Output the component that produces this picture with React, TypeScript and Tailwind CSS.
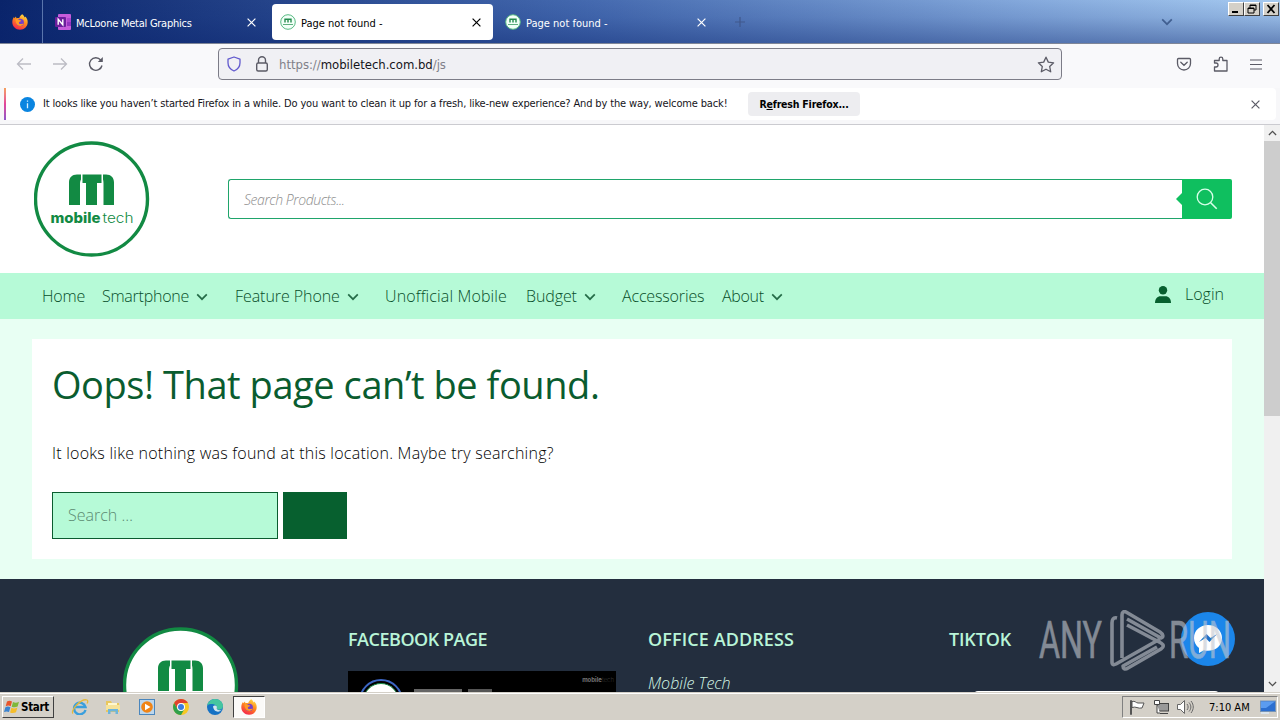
import type { ReactNode } from "react"
import clsx from "clsx"

const uiFont = "font-['DejaVu_Sans_Condensed','DejaVu_Sans',sans-serif] [font-stretch:condensed]"
const siteFont = "font-['Open_Sans','Noto_Sans',sans-serif] [font-stretch:normal]"

function Firefox({ size = 16 }: { size?: number }) {
  return (
    <svg width={size} height={size} viewBox="0 0 16 16" className="shrink-0">
      <defs>
        <linearGradient id="ffBody" x1="0.8" y1="0" x2="0.3" y2="1">
          <stop offset="0" stopColor="#ffe14a" />
          <stop offset="0.45" stopColor="#ff8a1c" />
          <stop offset="1" stopColor="#f5224d" />
        </linearGradient>
      </defs>
      <path
        d="M10.2.2c1.5 1 2.2 2.3 2.5 3.3.4-.2.5-.6.5-.9C15 4.200 15.800 6.300 15.700 8.600 15.500 12.800 12.200 15.800 8 15.800S.3 12.500.3 8.300C.3 6.200 1 4.300 2 3.100l.3 1.200L4 2.500l.4 1.700c1-.4 2-.4 2.800 0C7.600 2.500 8.700 1 10.200.2z"
        fill="url(#ffBody)"
      />
      <circle cx="8.200" cy="8.400" r="3.700" fill="#7540c8" />
      <path d="M3.500 5.300c1.500-.6 2.800-.2 3.800.6l2 .5c-.4 1.200-1.700 1-2.300 1.800-.5.8.2 2 1.600 1.900 1.300-.1 1.800-.7 3-.3-1 1.700-2.600 2.500-4.500 2-2.300-.6-3.800-3.500-3.600-6.500z" fill="#ff9a26" />
    </svg>
  )
}

function Logo({ className }: { className?: string }) {
  return (
    <svg width="116" height="116" viewBox="0 0 116 116" className={clsx("shrink-0", className)}>
      <circle cx="57.500" cy="58" r="56" fill="#fff" stroke="#128a43" strokeWidth="3.400" />
      <g fill="#128a43">
        <path d="M47 33.500h-4c-5 0-8 3-8 8V64h11V43.500c0-2 0-3 1-5z" />
        <path d="M48.500 33.500h19v8.500H63v22H52V42h-3.500z" />
        <path d="M69 33.500h3c5 0 8 3 8 8V64H69.500V43.500c0-2 0-3-.5-5z" />
      </g>
      <text x="16.500" y="82" fontSize="14" fontWeight="800" fontFamily="Inter" fill="#128a43" textLength="50" lengthAdjust="spacingAndGlyphs">
        mobile
      </text>
      <text x="68.500" y="82" fontSize="14" fontWeight="300" fontFamily="Inter" fill="#128a43" textLength="31" lengthAdjust="spacingAndGlyphs">
        tech
      </text>
    </svg>
  )
}

// The footer only shows the upper half of the badge
function LogoTop() {
  return (
    <svg width="116" height="65" viewBox="0 0 116 65" className="shrink-0">
      <circle cx="57.500" cy="58" r="56" fill="#fff" stroke="#128a43" strokeWidth="3.400" />
      <g fill="#128a43">
        <path d="M47 33.500h-4c-5 0-8 3-8 8V64h11V43.500c0-2 0-3 1-5z" />
        <path d="M48.500 33.500h19v8.500H63v22H52V42h-3.500z" />
        <path d="M69 33.500h3c5 0 8 3 8 8V64H69.500V43.500c0-2 0-3-.5-5z" />
      </g>
    </svg>
  )
}

function SiteFavicon() {
  return (
    <svg width="16" height="16" viewBox="0 0 16 16" className="shrink-0">
      <circle cx="8" cy="8" r="7.300" fill="#f2fff8" stroke="#58ba83" />
      <path d="M5 8.500V5.300h6v3.200M8 5.300v3.200" stroke="#238a4c" strokeWidth="1.400" fill="none" />
      <path d="M3 10.500h10" stroke="#5eaf7f" />
    </svg>
  )
}

function Cross({ size = 9, className }: { size?: number; className?: string }) {
  return (
    <svg width={size} height={size} viewBox="0 0 9 9" className={clsx("shrink-0", className)}>
      <path d="M.6.6l7.800 7.800M8.400.6L.6 8.400" stroke="currentColor" strokeWidth="1.200" />
    </svg>
  )
}

function Chevron({ className }: { className?: string }) {
  return (
    <svg width="12" height="8" viewBox="0 0 12 8" className={clsx("shrink-0", className)}>
      <path d="M1.200 1.400L6 6.200l4.800-4.800" fill="none" stroke="currentColor" strokeWidth="1.700" />
    </svg>
  )
}

function WindowButton({ children }: { children: ReactNode }) {
  return (
    <div className="h-[14px] w-4 border border-t-white border-r-[#404040] border-b-[#404040] border-l-white bg-[#d4d0c8]">
      <svg width="14" height="12" viewBox="0 0 14 12" fill="none" stroke="#000">
        {children}
      </svg>
    </div>
  )
}

function TabBar() {
  return (
    <div className="flex h-11 border-b border-[#7f8697] bg-[linear-gradient(to_bottom,transparent,rgba(10,40,120,0.12)_40%,rgba(10,36,110,0.42)),linear-gradient(to_right,#0a246a,#4368ae_45%,#84a9dc_80%,#a6caf0)] text-[11px]">
      <div className="flex w-[43px] items-center border-r border-[#5a75ac] pl-3">
        <Firefox />
      </div>
      <div className="flex w-[229px] items-center pt-px pl-3 text-white">
        <svg width="16" height="16" viewBox="0 0 16 16" className="shrink-0">
          <rect x="3" y="0" width="13" height="16" rx="1" fill="#c65cdb" />
          <path d="M12 4h4v4h-4z" fill="#ad45cf" />
          <path d="M12 8h4v4h-4z" fill="#9332bf" />
          <rect x="0" y="3" width="11" height="10" rx="1" fill="#6b1e9c" />
          <path d="M3.200 10.800V5.200l4.600 5.600V5.200" fill="none" stroke="#fff" strokeWidth="1.400" />
        </svg>
        <span className="ml-[5px] w-[171px] pt-[4px] whitespace-nowrap tracking-[-0.25px]">McLoone Metal Graphics</span>
        <Cross />
      </div>
      <div className="mt-1 flex h-9 w-[221px] items-center rounded bg-white pl-2 text-black">
        <SiteFavicon />
        <span className="ml-[5px] w-[171px] pt-[4px] whitespace-nowrap">Page not found -</span>
        <Cross />
      </div>
      <div className="flex w-[226px] items-center pt-px pl-3 text-white">
        <SiteFavicon />
        <span className="ml-[5px] w-[171px] pt-[4px] whitespace-nowrap">Page not found -</span>
        <Cross />
      </div>
      <div className="flex flex-1 items-center pt-px pl-4 text-[#40588c]">
        <svg width="10" height="10" viewBox="0 0 10 10">
          <path d="M5 0v10M0 5h10" stroke="currentColor" strokeWidth="1.200" />
        </svg>
      </div>
      <div className="flex w-[67px] items-center text-[#415f91]">
        <Chevron />
      </div>
      <div className="flex w-[52px] pt-[2px]">
        <WindowButton>
          <path d="M3 9h6" strokeWidth="2" />
        </WindowButton>
        <WindowButton>
          <path d="M5 2h6v5H9M5 2.500h6M5 2v3M3 5h6v5H3zM3 5.500h6" />
        </WindowButton>
        <div className="ml-[3px]">
          <WindowButton>
            <path d="M3.500 2l7 8M10.500 2l-7 8" strokeWidth="1.800" />
          </WindowButton>
        </div>
      </div>
    </div>
  )
}

function Toolbar() {
  return (
    <div className="flex h-11 items-center bg-[#f9f9fb] pb-1 text-[#5b5b66]">
      <div className="flex w-[218px] items-center gap-5 pl-4">
        <svg width="16" height="16" viewBox="0 0 16 16" fill="none" stroke="#bcbcc4" strokeWidth="1.300">
          <path d="M15 8H1.500M7 2.500L1.500 8 7 13.500" />
        </svg>
        <svg width="16" height="16" viewBox="0 0 16 16" fill="none" stroke="#bcbcc4" strokeWidth="1.300">
          <path d="M1 8h13.500M9 2.500L14.500 8 9 13.500" />
        </svg>
        <svg width="16" height="16" viewBox="0 0 16 16" fill="none" stroke="currentColor" strokeWidth="1.400">
          <path d="M14 9.500A6.300 6.300 0 1 1 12.700 4" />
          <path d="M14.800 1v5h-5z" fill="currentColor" stroke="none" />
        </svg>
      </div>
      <div className="flex h-8 w-[844px] items-center rounded-[4px] border border-[#7c7c87] bg-[#f0f0f4] pl-2">
        <svg width="14" height="16" viewBox="0 0 14 16" fill="none" stroke="#6159ce" strokeWidth="1.300">
          <path d="M7 1l6 2.200v3.600C13 10.500 11 13.400 7 15 3 13.400 1 10.500 1 6.800V3.200z" strokeLinejoin="round" />
        </svg>
        <svg width="14" height="16" viewBox="0 0 14 16" fill="none" stroke="#5b5b66" strokeWidth="1.400" className="ml-[14px]">
          <rect x="1.700" y="7" width="10.600" height="8" rx="1.500" />
          <path d="M3.500 7V4.200a3.500 3.500 0 0 1 7 0V7" />
        </svg>
        <span className="ml-[10px] w-[758px] pt-0.5 text-[13px] tracking-[-0.03px] whitespace-nowrap text-[#808089]">
          https://<span className="text-[#15141a]">mobiletech.com.bd</span>/js
        </span>
        <svg width="18" height="17" viewBox="0 0 18 17" fill="none" stroke="currentColor" strokeWidth="1.300" strokeLinejoin="round" className="shrink-0">
          <path d="M9 1.200l2.300 4.900 5.300.7-3.900 3.700 1 5.300L9 13.200l-4.700 2.600 1-5.300L1.400 6.800l5.300-.7z" />
        </svg>
      </div>
      <div className="flex flex-1 items-center justify-end gap-[21px] pr-[18px]">
        <svg width="16" height="16" viewBox="0 0 16 16" fill="none" stroke="currentColor" strokeWidth="1.300">
          <path d="M2.500 2.500h11c.7 0 1 .4 1 1V7.500a6.500 6.500 0 0 1-13 0v-4c0-.6.300-1 1-1z" />
          <path d="M4.800 6.300L8 9.300l3.200-3" strokeLinecap="round" />
        </svg>
        <svg width="16" height="16" viewBox="0 0 16 16" fill="none" stroke="currentColor" strokeWidth="1.300">
          <path d="M1.500 15V11H3a2 2 0 0 0 0-4H1.500V4.500h4.700V3a1.800 1.800 0 0 1 3.600 0v1.500H14V15z" strokeLinejoin="round" />
        </svg>
        <svg width="12" height="11" viewBox="0 0 12 11" stroke="currentColor" strokeWidth="1.200">
          <path d="M0 1h12M0 5.500h12M0 10h12" />
        </svg>
      </div>
    </div>
  )
}

function RefreshNotice() {
  return (
    <div className="h-[37px] border-b border-[#cbcbd0] bg-[#f7f7f9] pr-1 pl-1">
      <div className="flex h-8 items-center rounded-r-[4px] bg-white text-[11px] text-[#15141a]">
        <div className="h-8 w-[2px] bg-linear-to-b from-[#f5a05c] via-[#e3439a] to-[#8d55c9]" />
        <svg width="15" height="15" viewBox="0 0 15 15" className="ml-[14px] shrink-0">
          <circle cx="7.500" cy="7.500" r="7.500" fill="#0a85e0" />
          <path d="M7.500 6.300v5M7.500 3.400v1.400" stroke="#d8f0ff" strokeWidth="1.300" />
        </svg>
        <span className="ml-2 w-[705px] whitespace-nowrap tracking-[-0.145px]">
          It looks like you haven’t started Firefox in a while. Do you want to clean it up for a fresh, like-new experience? And by the way, welcome back!
        </span>
        <button className="h-6 w-28 shrink-0 rounded bg-[#ededf0] pt-0.5 text-[10.500px] font-bold tracking-[-0.2px] whitespace-nowrap text-black">
          R<u>e</u>fresh Firefox...
        </button>
        <Cross className="mr-4 ml-auto text-[#5b5b66]" />
      </div>
    </div>
  )
}

const menu = [
  { label: "Home", cell: "w-[60px]", text: "tracking-[-0.2px]" },
  { label: "Smartphone", cell: "w-[133px]", text: "w-[94px] tracking-[-0.25px]", dropdown: true },
  { label: "Feature Phone", cell: "w-[150px]", text: "w-[112px] tracking-[-0.07px]", dropdown: true },
  { label: "Unofficial Mobile", cell: "w-[141px]", text: "tracking-[0.13px]" },
  { label: "Budget", cell: "w-[96px]", text: "w-[58px] tracking-[-0.1px]", dropdown: true },
  { label: "Accessories", cell: "w-[100px]", text: "tracking-[-0.15px]" },
  { label: "About", cell: "w-[70px]", text: "w-[49px] tracking-[-0.3px]", dropdown: true },
]

function SiteHeader() {
  return (
    <header>
      <div className="flex h-[148px] pl-[34px]">
        <Logo className="mt-4" />
        <div className="mt-[54px] ml-[78px] flex h-10 w-[1004px]">
          <div className="flex flex-1 items-center rounded-l-[3px] border border-r-0 border-[#1fa56b] pl-[15px]">
            <span className="text-[14px] font-light tracking-[-0.43px] text-[#8d8d8d] italic">Search Products...</span>
          </div>
          <div className="relative flex w-[50px] items-center justify-center rounded-r-[2px] bg-[#0fbf5f]">
            <div className="absolute top-[14px] -left-[6px] border-y-[6px] border-r-[6px] border-y-transparent border-r-[#0fbf5f]" />
            <svg width="22" height="22" viewBox="0 0 22 22" fill="none" stroke="#d9ffe9" strokeWidth="1.300">
              <circle cx="9" cy="9" r="7.800" />
              <path d="M14.700 14.700l6 6" strokeWidth="1.600" />
            </svg>
          </div>
        </div>
      </div>
      <nav className="flex h-[46px] items-center bg-[#b6fad7] pl-[42px] text-[16px] font-light text-[#064e29]">
        {menu.map((item) => (
          <div key={item.label} className={clsx("flex items-center", item.cell)}>
            <span className={clsx("whitespace-nowrap", item.text)}>{item.label}</span>
            {item.dropdown && <Chevron className="mt-[2px] text-[#256c48]" />}
          </div>
        ))}
        <div className="mr-10 mb-1 ml-auto flex items-center">
          <svg width="16" height="17" viewBox="0 0 16 17" fill="#07602f" className="mr-[14px]">
            <circle cx="8" cy="4.300" r="4.200" />
            <path d="M0 17c0-4.500 2.500-6.800 5.500-6.800h5c3 0 5.500 2.300 5.500 6.800z" />
          </svg>
          Login
        </div>
      </nav>
    </header>
  )
}

function NotFound() {
  return (
    <main className="bg-[#e8fff3] px-8 py-5">
      <div className="h-[220px] bg-white px-5 pt-5">
        <h1 className="-mt-px text-[38px] leading-[52px] tracking-[-0.44px] whitespace-nowrap text-[#0a5c2f]">
          Oops! That page can’t be found.
        </h1>
        <p className="mt-[29px] text-[16px] leading-[28px] font-light tracking-[0.24px] whitespace-nowrap text-black">
          It looks like nothing was found at this location. Maybe try searching?
        </p>
        <div className="mt-[25px] flex gap-[5px]">
          <div className="flex h-[47px] w-[226px] items-center border border-[#0a5c2f] bg-[#b6fad7] pb-0.5 pl-[15px] text-[16px] font-light text-[#5c8a72]">
            Search …
          </div>
          <div className="h-[47px] w-16 bg-[#07602f]" />
        </div>
      </div>
    </main>
  )
}

function Watermark() {
  return (
    <div className="absolute top-[31px] right-[32px] h-[62px] w-[194px]">
      <div className="absolute top-[2px] right-[-3px] flex size-[54px] items-center justify-center rounded-full bg-[#1b86ea]">
        <svg width="30" height="30" viewBox="0 0 30 30">
          <path d="M15 1C7 1 1 6.500 1 14c0 4 1.800 7.500 5 10v5l5-2.700c1.200.4 2.600.5 4 .5 8 0 14-5.500 14-12.800S23 1 15 1z" fill="#fff" />
          <path d="M6 18l7.500-8 4 4 6.500-4-7.500 8-4-4z" fill="#1b70c8" />
        </svg>
      </div>
      <svg width="194" height="62" viewBox="0 0 194 62" className="absolute inset-0 opacity-60">
        <g fill="#c3c8cf" stroke="#c3c8cf" strokeWidth="0.600" fontFamily="Roboto" fontSize="51" fontWeight="400">
          <text x="1" y="48" textLength="63" lengthAdjust="spacingAndGlyphs">ANY</text>
          <text x="131" y="48" textLength="62" lengthAdjust="spacingAndGlyphs">RUN</text>
        </g>
        <g fill="none" stroke="#c3c8cf" strokeWidth="3.600" strokeLinejoin="round">
          <path d="M79 8c-4-1-5 2-5 5v39c0 3 2 3 4 2l44-25" />
          <path d="M84 48V5c0-3 2-4 4-3l34 20c3 2 4 5 1 6l-34-19" />
          <path d="M89 15l34 18c3 2 3 4 0 6L90 58c-3 2-5 1-5-2l34-19" />
        </g>
      </svg>
    </div>
  )
}

function SiteFooter() {
  return (
    <footer className="relative flex h-[113px] overflow-hidden bg-[#232e3e] text-[#b9f5d8]">
      <div className="w-[348px] pt-12 pl-[123px]">
        <LogoTop />
      </div>
      <div className="w-[300px] pt-[49px]">
        <h2 className="text-[18px] leading-[22px] font-semibold tracking-[-0.48px] whitespace-nowrap">FACEBOOK PAGE</h2>
        <div className="relative mt-[21px] h-10 w-[268px] overflow-hidden bg-black">
          <div className="absolute top-2 left-[11px] size-11 rounded-full border-2 border-[#3c66c4] p-[2px]">
            <div className="size-full rounded-full border border-[#128a43] bg-white" />
          </div>
          <div className="absolute top-[18px] left-[66px] flex gap-[6px]">
            <div className="h-1 w-12 bg-[#666]" />
            <div className="h-1 w-6 bg-[#555]" />
          </div>
          <span className="absolute top-[4px] right-[2px] font-[Inter] text-[6px] leading-[9px] font-bold text-[#777]">
            mobile<span className="font-light text-[#333]">tech</span>
          </span>
        </div>
      </div>
      <div className="w-[301px] pt-[49px]">
        <h2 className="text-[18px] leading-[22px] font-semibold tracking-[0.1px] whitespace-nowrap">OFFICE ADDRESS</h2>
        <p className="mt-[23px] text-[16px] leading-5 font-light text-[#d5f8e7] italic">Mobile Tech</p>
      </div>
      <div className="flex-1 pt-[49px]">
        <h2 className="text-[18px] leading-[22px] font-semibold tracking-[-0.15px] whitespace-nowrap">TIKTOK</h2>
        <div className="mt-[41px] ml-[25px] h-4 w-[245px] rounded bg-white" />
      </div>
      <Watermark />
    </footer>
  )
}

function Scrollbar() {
  return (
    <div className="flex w-4 flex-col bg-[#f0f0f0] text-[#505050]">
      <div className="flex h-4 items-center justify-center">
        <Chevron className="w-[9px] rotate-180" />
      </div>
      <div className="h-[275px] bg-[#cdcdcd]" />
      <div className="mt-auto flex h-4 items-center justify-center">
        <Chevron className="w-[9px]" />
      </div>
    </div>
  )
}

function Taskbar() {
  return (
    <div className="flex h-7 items-center border-t border-[#d4d0c8] bg-[#d4d0c8] text-[11px] text-black shadow-[inset_0_1px_0_#fff]">
      <div className="mt-px ml-[2px] flex h-[22px] w-[52px] items-center border border-t-white border-r-[#404040] border-b-[#404040] border-l-white">
        <svg width="16" height="16" viewBox="0 0 16 16" className="ml-px shrink-0">
          <path d="M3 2.500c2-1.200 3.500-.8 5 0L6.700 7.300c-1.500-.8-3-1-5 0z" fill="#e8552b" />
          <path d="M9 3c2 1 4 .8 6-.3l-1.400 4.800c-2 1-4 1-5.900.2z" fill="#7fb83a" />
          <path d="M1.400 8.300c2-1.200 3.500-.8 5 0L5 13.100c-1.500-.8-3-1-5 0z" fill="#3b84d0" />
          <path d="M7.400 8.800c2 1 4 .8 6-.3L12 13.300c-2 1-4 1-5.900.2z" fill="#f5bd2a" />
        </svg>
        <span className="ml-px pt-0.5 text-[11.500px] font-bold tracking-[-0.3px]">Start</span>
      </div>
      <div className="mt-px ml-[17px] flex items-center">
        <svg width="18" height="16" viewBox="0 0 18 16" fill="none" className="mr-4">
          <path d="M14.500 11A5.800 5.800 0 1 1 14.500 8H4.500" stroke="#3a9fdd" strokeWidth="2.400" />
          <path d="M2 14.500C-1 12 10-1 16 1c1 .5 1 2 0 3.500" stroke="#e5b93b" strokeWidth="1.300" />
        </svg>
        <svg width="16" height="16" viewBox="0 0 16 16" className="mr-[18px]">
          <path d="M1 2h5l1 2h7v9H1z" fill="#e9c75d" />
          <path d="M3 4h9v3H3z" fill="#fff8cf" />
          <path d="M1 6h14v5H1z" fill="#f6e39a" />
          <path d="M3 15v-5h10v5h-2.500v-2.500h-5V15z" fill="#6db5dc" />
        </svg>
        <svg width="16" height="16" viewBox="0 0 16 16" className="mr-[18px]">
          <rect x=".5" y=".5" width="15" height="15" fill="#bcd6ec" stroke="#4a86bd" />
          <circle cx="8" cy="8" r="5.800" fill="#f08416" />
          <path d="M6 4.700v6.600L11.500 8z" fill="#fff" />
        </svg>
        <svg width="16" height="16" viewBox="0 0 16 16" className="mr-[18px]">
          <circle cx="8" cy="8" r="8" fill="#f7c824" />
          <path d="M1.100 4A8 8 0 0 1 14.900 4H8L4.500 10z" fill="#e0412f" />
          <path d="M1.100 4A8 8 0 0 0 8 16l3.500-6H4.500z" fill="#2fa04c" />
          <circle cx="8" cy="8" r="4" fill="#fff" />
          <circle cx="8" cy="8" r="3" fill="#3b7de0" />
        </svg>
        <svg width="16" height="16" viewBox="0 0 16 16" className="mr-[10px]">
          <circle cx="8" cy="8" r="8" fill="#1672c4" />
          <path d="M.2 6.500C1 2.500 4.500 0 8 0c5 0 8 3.500 8 7 0 2.500-2 3.800-4 3.800-2 0-2.800-.8-2-2C10.500 6.500 5 3 .2 6.500z" fill="#45c5a0" />
          <path d="M6 7.500c1-1.500 3.500-1 4 .5-1 1.800.3 3.500 3.500 3.200l1.400-.6C13 13.500 7 14 6 7.500z" fill="#d4e6ee" />
        </svg>
        <div className="flex h-[22px] w-8 items-center justify-center border border-t-[#404040] border-r-white border-b-white border-l-[#404040] bg-[#fbfaf8]">
          <Firefox />
        </div>
      </div>
      <div className="mt-px mr-[2px] ml-auto flex h-[22px] w-[156px] items-center border border-t-[#808080] border-r-white border-b-white border-l-[#808080] pl-[6px]">
        <svg width="16" height="16" viewBox="0 0 16 16" fill="#fff" stroke="#555" className="mr-2 shrink-0">
          <path d="M1.500 1.500v14h1v-14zM3 2.500c3-1 4 1.500 6 1.500h6l-2 5c-4 1-6-2-10-.5z" />
        </svg>
        <svg width="16" height="16" viewBox="0 0 16 16" fill="#fff" stroke="#444" className="mr-2 shrink-0">
          <rect x="4.500" y="4.500" width="11" height="7.500" fill="#999" />
          <path d="M1.500 1.500h5v4h-5zM4 5.500V14h3M7 14.500h8" />
        </svg>
        <svg width="17" height="16" viewBox="0 0 17 16" fill="#fff" stroke="#666" className="shrink-0">
          <path d="M.5 5.500h3l4-4v13l-4-4h-3z" />
          <path d="M10 5c1.500 2 1.500 4 0 6M12 3.500c2.500 3 2.500 6 0 9M14 2c3 4 3 8 0 12" fill="none" />
        </svg>
        <span className="ml-[15px] w-[51px] pt-0.5 whitespace-nowrap">7:10 AM</span>
        <svg width="16" height="14" viewBox="0 0 16 14" className="shrink-0">
          <rect x=".5" y="1" width="15" height="10.500" fill="#2c6fd0" stroke="#7794b6" />
          <path d="M1 1.500h14L6 8H1z" fill="#5b9cf0" />
          <path d="M1 13h8" stroke="#dcebfa" strokeWidth="1.500" />
        </svg>
      </div>
    </div>
  )
}

export default function App() {
  return (
    <div className={clsx("flex h-[720px] w-[1280px] flex-col overflow-hidden bg-white", uiFont)}>
      <TabBar />
      <Toolbar />
      <RefreshNotice />
      <div className="flex h-[567px]">
        <div className={clsx("w-[1264px] overflow-hidden", siteFont)}>
          <SiteHeader />
          <NotFound />
          <SiteFooter />
        </div>
        <Scrollbar />
      </div>
      <Taskbar />
    </div>
  )
}
